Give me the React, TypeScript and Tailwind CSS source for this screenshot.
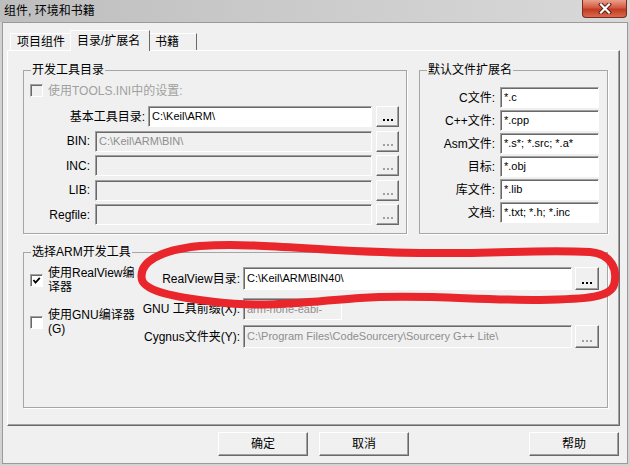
import React from "react";

const font = "font-['Liberation_Sans','Noto_Sans_CJK_SC',sans-serif]";

const sunken =
  "border border-t-[#a0a0a0] border-l-[#a0a0a0] border-b-white border-r-white shadow-[inset_1px_1px_0_#696969]";
const raised =
  "border border-t-white border-l-white border-b-[#696969] border-r-[#696969] shadow-[inset_-1px_-1px_0_#a0a0a0]";

function Edit({ value, disabled, className }: { value?: string; disabled?: boolean; className: string }) {
  return (
    <div
      className={`${className} flex items-center overflow-hidden whitespace-nowrap pl-[3px] text-[11px] leading-none ${sunken} ${
        disabled ? "bg-[#f0f0f0] text-[#8e8e8e]" : "bg-white text-black"
      }`}
    >
      {value}
    </div>
  );
}

function Browse({ disabled, className }: { disabled?: boolean; className: string }) {
  const dot = disabled ? "h-[2px] w-[2px] bg-[#a0a0a0]" : "h-[2px] w-[2px] bg-black";
  return (
    <div className={`${className} flex shrink-0 items-end justify-center bg-[#f0f0f0] pb-[5px] ${raised}`}>
      <div className="flex gap-[2px]">
        <span className={dot} />
        <span className={dot} />
        <span className={dot} />
      </div>
    </div>
  );
}

function Check({ checked, disabled }: { checked?: boolean; disabled?: boolean }) {
  return (
    <span
      className={`flex h-[13px] w-[13px] shrink-0 items-center justify-center ${sunken} ${
        disabled ? "bg-[#f0f0f0]" : "bg-white"
      }`}
    >
      {checked && (
        <svg width="9" height="9" viewBox="0 0 9 9">
          <path d="M1.5 4 L3.5 6.5 L7.8 1.8" stroke="#000" strokeWidth="1.8" fill="none" />
        </svg>
      )}
    </span>
  );
}

function Group({ title, className, children }: { title: string; className: string; children: React.ReactNode }) {
  return (
    <fieldset className={`${className} min-w-0 border border-[#a6a6a6] shadow-[1px_1px_0_#fff]`}>
      <legend className="ml-[7px] px-[1px] text-[12px] leading-[14px]">{title}</legend>
      {children}
    </fieldset>
  );
}

function DirRow({ label, value, disabled, editW }: { label: string; value?: string; disabled?: boolean; editW: string }) {
  return (
    <div className="flex h-[21px] items-center">
      <span className={`flex-1 whitespace-nowrap text-right text-[12px] leading-[14px] ${editW === "w-[224px]" ? "pr-[3px]" : "pr-[5px]"}`}>
        {label}
      </span>
      <Edit value={value} disabled={disabled} className={`${editW} h-[21px]`} />
      <Browse disabled={disabled} className="ml-[4px] h-[21px] w-[23px]" />
    </div>
  );
}

function ExtRow({ label, value }: { label: string; value: string }) {
  return (
    <div className="flex h-[21px] items-center">
      <span className="flex-1 whitespace-nowrap pr-[5px] text-right text-[12px] leading-[14px]">{label}</span>
      <Edit value={value} className="h-[21px] w-[99px]" />
    </div>
  );
}

function DlgButton({ label, className }: { label: string; className: string }) {
  return (
    <div className={`${className} flex h-[24px] w-[90px] items-center justify-center bg-[#f0f0f0] text-[12px] ${raised}`}>
      {label}
    </div>
  );
}

export default function App() {
  return (
    <div className={`relative h-[466px] w-[630px] overflow-hidden bg-[#d2d2d2] text-black ${font}`}>
      {/* title bar */}
      <div className="flex h-[22px] items-start justify-between bg-[linear-gradient(90deg,#bebebe,#cdcdcd_55%,#d9d9d9)]">
        <span className="pl-[4px] pt-[4px] text-[12px] leading-[14px]">组件, 环境和书籍</span>
        <div className="mr-[3px] flex h-[18px] w-[45px] items-center justify-center rounded-b-[4px] border border-t-0 border-[#7b2b20] bg-[linear-gradient(#e9a08c,#d35a42_45%,#c23a22_55%,#d86a4e)]">
          <svg width="14" height="11" viewBox="0 0 14 11">
            <path d="M3 1.5 L11 9.5 M11 1.5 L3 9.5" stroke="#5a1a10" strokeWidth="4" strokeLinecap="square" />
            <path d="M3 1.5 L11 9.5 M11 1.5 L3 9.5" stroke="#fff" strokeWidth="2.2" strokeLinecap="square" />
          </svg>
        </div>
      </div>

      {/* client area */}
      <div className="mx-[2px] h-[442px] border border-[#9a9a9a] bg-[#f0f0f0]">
        {/* tabs */}
        <div className="mt-[7px] flex h-[20px] items-end pl-[7px]">
          <div className="flex h-[17px] w-[60px] items-center border-l border-t border-white pl-[6px] text-[12px] leading-[14px]">
            项目组件
          </div>
          <div className="relative z-10 -mb-px flex h-[21px] w-[80px] items-center border-l border-r border-t border-l-white border-r-[#696969] border-t-white bg-[#f0f0f0] pl-[6px] text-[12px] leading-[14px]">
            目录/扩展名
          </div>
          <div className="flex h-[17px] w-[47px] items-center border-r border-t border-r-[#696969] border-t-white pl-[5px] text-[12px] leading-[14px]">
            书籍
          </div>
        </div>

        {/* tab panel */}
        <div className={`ml-[4px] flex h-[376px] w-[613px] flex-col pl-[15px] pr-[11px] pt-[12px] ${raised}`}>
          <div className="flex gap-[12px]">
            <Group title="开发工具目录" className="h-[171px] w-[384px]">
              <div className="pl-[6px] pr-[7px] pt-[7px]">
                <div className="flex h-[13px] items-center gap-[5px]">
                  <Check disabled />
                  <span className="text-[12px] leading-[14px] text-[#a0a0a0]">使用TOOLS.INI中的设置:</span>
                </div>
                <div className="mt-[9px] flex flex-col gap-[3.5px]">
                  <DirRow label="基本工具目录:" value="C:\Keil\ARM\" editW="w-[224px]" />
                  <DirRow label="BIN:" value="C:\Keil\ARM\BIN\" disabled editW="w-[277px]" />
                  <DirRow label="INC:" disabled editW="w-[277px]" />
                  <DirRow label="LIB:" disabled editW="w-[277px]" />
                  <DirRow label="Regfile:" disabled editW="w-[277px]" />
                </div>
              </div>
            </Group>

            <Group title="默认文件扩展名" className="h-[171px] w-[189px]">
              <div className="flex flex-col gap-[2px] pl-[6px] pr-[8px] pt-[10px]">
                <ExtRow label="C文件:" value="*.c" />
                <ExtRow label="C++文件:" value="*.cpp" />
                <ExtRow label="Asm文件:" value="*.s*; *.src; *.a*" />
                <ExtRow label="目标:" value="*.obj" />
                <ExtRow label="库文件:" value="*.lib" />
                <ExtRow label="文档:" value="*.txt; *.h; *.inc" />
              </div>
            </Group>
          </div>

          <Group title="选择ARM开发工具" className="mt-[11px] h-[163px] w-[585px]">
            <div className="flex pl-[6px] pr-[8px]">
              <div className="flex w-[105px] shrink-0 flex-col gap-[14px] pt-[7px]">
                <div className="flex items-center gap-[5px]">
                  <Check checked />
                  <span className="whitespace-nowrap text-[12px] leading-[14px]">
                    使用RealView编
                    <br />
                    译器
                  </span>
                </div>
                <div className="flex items-center gap-[5px]">
                  <Check />
                  <span className="whitespace-nowrap text-[12px] leading-[14px]">
                    使用GNU编译器
                    <br />
                    (G)
                  </span>
                </div>
              </div>

              <div className="flex flex-1 flex-col pt-[8px]">
                <div className="flex h-[23px] items-center">
                  <span className="w-[108px] whitespace-nowrap pr-[3px] text-right text-[12px] leading-[14px]">RealView目录:</span>
                  <Edit value="C:\Keil\ARM\BIN40\" className="h-[23px] flex-1" />
                  <Browse className="ml-[3px] h-[23px] w-[24px]" />
                </div>
                <div className="mt-[8px] flex h-[22px] items-center">
                  <span className="w-[108px] whitespace-nowrap pr-[3px] text-right text-[12px] leading-[14px]">GNU 工具前缀(X):</span>
                  <Edit value="arm-none-eabi-" disabled className="h-[22px] w-[99px]" />
                </div>
                <div className="mt-[5px] flex h-[23px] items-center">
                  <span className="w-[108px] whitespace-nowrap pr-[3px] text-right text-[12px] leading-[14px]">Cygnus文件夹(Y):</span>
                  <Edit
                    value={"C:\\Program Files\\CodeSourcery\\Sourcery G++ Lite\\"}
                    disabled
                    className="h-[23px] flex-1"
                  />
                  <Browse disabled className="ml-[3px] h-[23px] w-[24px]" />
                </div>
              </div>
            </div>
          </Group>
        </div>

        {/* dialog buttons */}
        <div className="mt-[6px] flex">
          <DlgButton label="确定" className="ml-[215px]" />
          <DlgButton label="取消" className="ml-[11px]" />
          <DlgButton label="帮助" className="ml-auto mr-[8px]" />
        </div>
      </div>

      {/* red hand-drawn marker around the RealView row */}
      <svg className="pointer-events-none absolute left-0 top-0" width="630" height="466" viewBox="0 0 630 466">
        <path
          d="M142 280 C138 262 160 250 200 246 C260 242 320 252 420 253 C500 254 540 249 590 252 C612 254 618 270 614 285 C610 297 590 299 540 300 C470 300 420 294 360 298 C310 302 260 308 215 302 C180 298 146 292 142 280 Z"
          fill="none"
          stroke="#e8262b"
          strokeWidth="8"
          strokeLinecap="round"
          strokeLinejoin="round"
        />
      </svg>
    </div>
  );
}
